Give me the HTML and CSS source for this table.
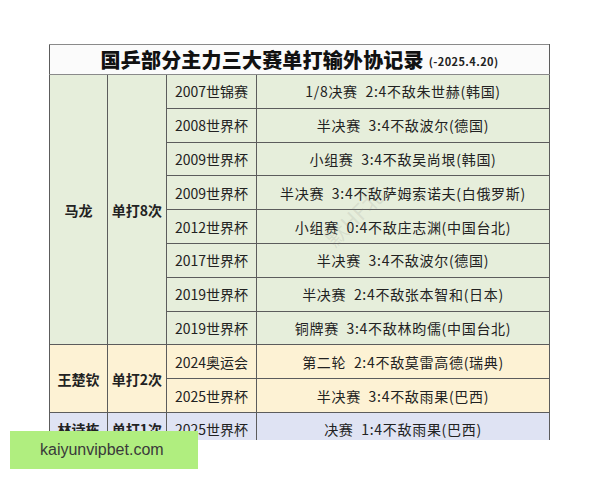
FILE: index.html
```html
<!DOCTYPE html>
<html lang="zh">
<head>
<meta charset="utf-8">
<link rel="stylesheet" href="styles.css">
</head>
<body>
<div class="page">
  <div class="sheet">
    <table class="record">
      <colgroup>
        <col class="c1"><col class="c2"><col class="c3"><col class="c4">
      </colgroup>
      <tr class="title-row">
        <td colspan="4"><span class="title">国乒部分主力三大赛单打输外协记录</span><span class="date">(-2025.4.20)</span></td>
      </tr>
      <tr class="ml">
        <td rowspan="8" class="name">马龙</td>
        <td rowspan="8" class="name">单打8次</td>
        <td class="ev">2007世锦赛</td><td class="res">1/8决赛&nbsp; 2:4不敌朱世赫(韩国)</td>
      </tr>
      <tr class="ml"><td class="ev">2008世界杯</td><td class="res">半决赛&nbsp; 3:4不敌波尔(德国)</td></tr>
      <tr class="ml"><td class="ev">2009世界杯</td><td class="res">小组赛&nbsp; 3:4不敌吴尚垠(韩国)</td></tr>
      <tr class="ml"><td class="ev">2009世界杯</td><td class="res">半决赛&nbsp; 3:4不敌萨姆索诺夫(白俄罗斯)</td></tr>
      <tr class="ml"><td class="ev">2012世界杯</td><td class="res">小组赛&nbsp; 0:4不敌庄志渊(中国台北)</td></tr>
      <tr class="ml"><td class="ev">2017世界杯</td><td class="res">半决赛&nbsp; 3:4不敌波尔(德国)</td></tr>
      <tr class="ml"><td class="ev">2019世界杯</td><td class="res">半决赛&nbsp; 2:4不敌张本智和(日本)</td></tr>
      <tr class="ml"><td class="ev">2019世界杯</td><td class="res">铜牌赛&nbsp; 3:4不敌林昀儒(中国台北)</td></tr>
      <tr class="wcq">
        <td rowspan="2" class="name">王楚钦</td>
        <td rowspan="2" class="name">单打2次</td>
        <td class="ev">2024奥运会</td><td class="res">第二轮&nbsp; 2:4不敌莫雷高德(瑞典)</td>
      </tr>
      <tr class="wcq"><td class="ev">2025世界杯</td><td class="res">半决赛&nbsp; 3:4不敌雨果(巴西)</td></tr>
      <tr class="lsd">
        <td class="name">林诗栋</td>
        <td class="name">单打1次</td>
        <td class="ev">2025世界杯</td><td class="res">决赛&nbsp; 1:4不敌雨果(巴西)</td>
      </tr>
    </table>
    <div class="watermark">默HF北</div>
  </div>
  <div class="banner">kaiyunvipbet.com</div>
</div>
</body>
</html>
```
FILE: styles.css
```css
html, body {
  margin: 0;
  padding: 0;
  background: #ffffff;
}
.page {
  position: relative;
  width: 600px;
  height: 480px;
  font-family: "Noto Sans CJK SC", "Noto Sans", sans-serif;
  color: #222;
}
.sheet {
  position: relative;
  margin-left: 49px;
  padding-top: 44px;
  width: 506px;
  height: 396px;
  overflow: hidden;
}
.record {
  border-collapse: collapse;
  table-layout: fixed;
  width: 500px;
}
.c1 { width: 58px; }
.c2 { width: 59px; }
.c3 { width: 90px; }
.c4 { width: 293px; }
.record td {
  border: 1.5px solid #5c5c5c;
  padding: 0;
  text-align: center;
  vertical-align: middle;
  font-size: 14px;
  height: 32.8px;
  white-space: nowrap;
}
.title-row td {
  height: 29px;
  background: #fbfbfb;
  border-color: #8a8a8a #5c5c5c #8a8a8a #5c5c5c;
}
.title {
  font-size: 20px;
  font-weight: 900;
  color: #111;
  letter-spacing: 0.2px;
}
.date {
  font-size: 11px;
  font-weight: 700;
  margin-left: 5px;
  letter-spacing: 0.4px;
  vertical-align: 2px;
}
.ml td { background: #e6eedb; }
.wcq td { background: #fdf2d4; }
.lsd td { background: #dfe3f3; }
.name {
  font-weight: 700;
}
.ev {
  text-align: left;
  padding-left: 8px;
}
.res {
  letter-spacing: 0.7px;
}
.watermark {
  position: absolute;
  left: 268px;
  top: 200px;
  transform: rotate(-45deg);
  font-size: 22px;
  color: rgba(120, 120, 120, 0.14);
  pointer-events: none;
}
.banner {
  position: absolute;
  left: 10px;
  top: 431px;
  width: 188px;
  height: 38px;
  background: #b0ee7f;
  font-family: "Liberation Sans", "Noto Sans", sans-serif;
  font-size: 16px;
  color: #3a3a3a;
  line-height: 38px;
  padding-left: 30px;
  box-sizing: border-box;
}
```
